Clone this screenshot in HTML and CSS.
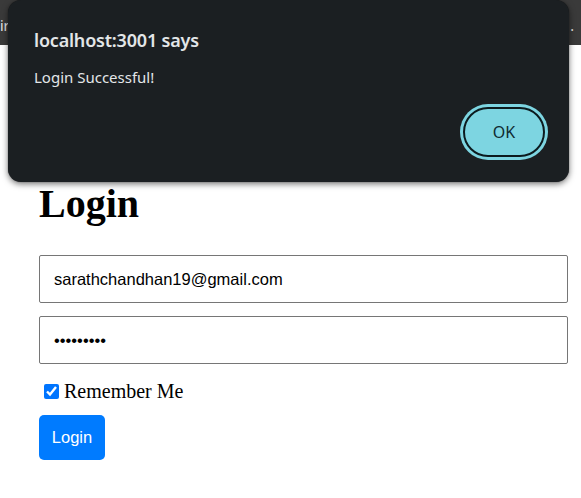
FILE: index.html
```html
<!DOCTYPE html>
<html lang="en">
<head>
<meta charset="utf-8">
<title>Login</title>
<link rel="stylesheet" href="styles.css">
</head>
<body>
  <div class="topbar">
    <span class="topbar-text">ir</span>
    <span class="topbar-text">.</span>
  </div>

  <main class="page">
    <h1 class="title">Login</h1>
    <form class="form">
      <input class="field" type="email" value="sarathchandhan19@gmail.com">
      <input class="field" type="password" value="123456789">
      <label class="remember">
        <input class="check" type="checkbox" checked>
        <span>Remember Me</span>
      </label>
      <button class="login-btn" type="button">Login</button>
    </form>
  </main>

  <div class="dialog" role="alertdialog">
    <div class="dialog-title">localhost:3001 says</div>
    <div class="dialog-msg">Login Successful!</div>
    <div class="dialog-actions">
      <button class="ok-btn" type="button">OK</button>
    </div>
  </div>
</body>
</html>
```

FILE: styles.css
```css
html, body {
  margin: 0;
  padding: 0;
  background: #ffffff;
}

body {
  width: 581px;
  height: 498px;
  overflow: hidden;
  position: relative;
  font-family: "Liberation Serif", serif;
}

.topbar {
  height: 45px;
  background: #3a3a3a;
  display: flex;
  align-items: center;
  justify-content: space-between;
  padding: 0 7px 0 0;
  box-sizing: border-box;
}

.topbar-text {
  font-family: "Noto Sans", sans-serif;
  font-size: 14px;
  color: #e6e6e6;
  margin-top: 6px;
}

.page {
  padding: 137px 13px 0 39px;
}

.title {
  margin: 0;
  font-family: "Liberation Serif", serif;
  font-weight: bold;
  font-size: 40px;
  line-height: 44px;
  color: #000;
}

.form {
  display: flex;
  flex-direction: column;
  align-items: flex-start;
  margin-top: 29px;
}

.field {
  width: 529px;
  height: 48px;
  box-sizing: border-box;
  border: 1px solid #767676;
  border-radius: 2px;
  padding: 0 14px;
  font-family: "Liberation Sans", sans-serif;
  font-size: 16.5px;
  color: #000;
  margin: 0 0 13px;
  background: #fff;
  outline: none;
}

.remember {
  display: flex;
  align-items: center;
  gap: 5px;
  font-size: 20px;
  line-height: 23px;
  margin-top: 3px;
  color: #000;
}

.check {
  width: 15px;
  height: 15px;
  margin: 0 0 0 5px;
  accent-color: #0075ff;
}

.login-btn {
  margin-top: 12px;
  width: 66px;
  height: 45px;
  border: none;
  border-radius: 5px;
  background: #007bff;
  color: #ffffff;
  font-family: "Liberation Sans", sans-serif;
  font-size: 16.5px;
  padding: 0;
}

.dialog {
  position: absolute;
  left: 8px;
  top: 0;
  width: 561px;
  height: 182px;
  box-sizing: border-box;
  background: #1b1f22;
  border-radius: 13px;
  box-shadow: 0 2px 6px rgba(0, 0, 0, 0.55), 0 0 1px rgba(0, 0, 0, 0.6);
  padding: 28px 24px 0 26px;
  font-family: "Noto Sans", sans-serif;
  color: #e3e6e8;
}

.dialog-title {
  font-size: 18px;
  font-weight: 600;
  line-height: 24px;
  letter-spacing: -0.2px;
}

.dialog-msg {
  margin-top: 15px;
  font-size: 15px;
  line-height: 20px;
}

.dialog-actions {
  display: flex;
  justify-content: flex-end;
  margin-top: 20px;
}

.ok-btn {
  width: 82px;
  height: 50px;
  box-sizing: border-box;
  border-radius: 25px;
  background: #7dd5e1;
  border: 2px solid #0c1b1f;
  box-shadow: 0 0 0 3px #7dd5e1;
  color: #0f2b31;
  font-family: "Noto Sans", sans-serif;
  font-size: 16px;
  padding: 0;
}
```
